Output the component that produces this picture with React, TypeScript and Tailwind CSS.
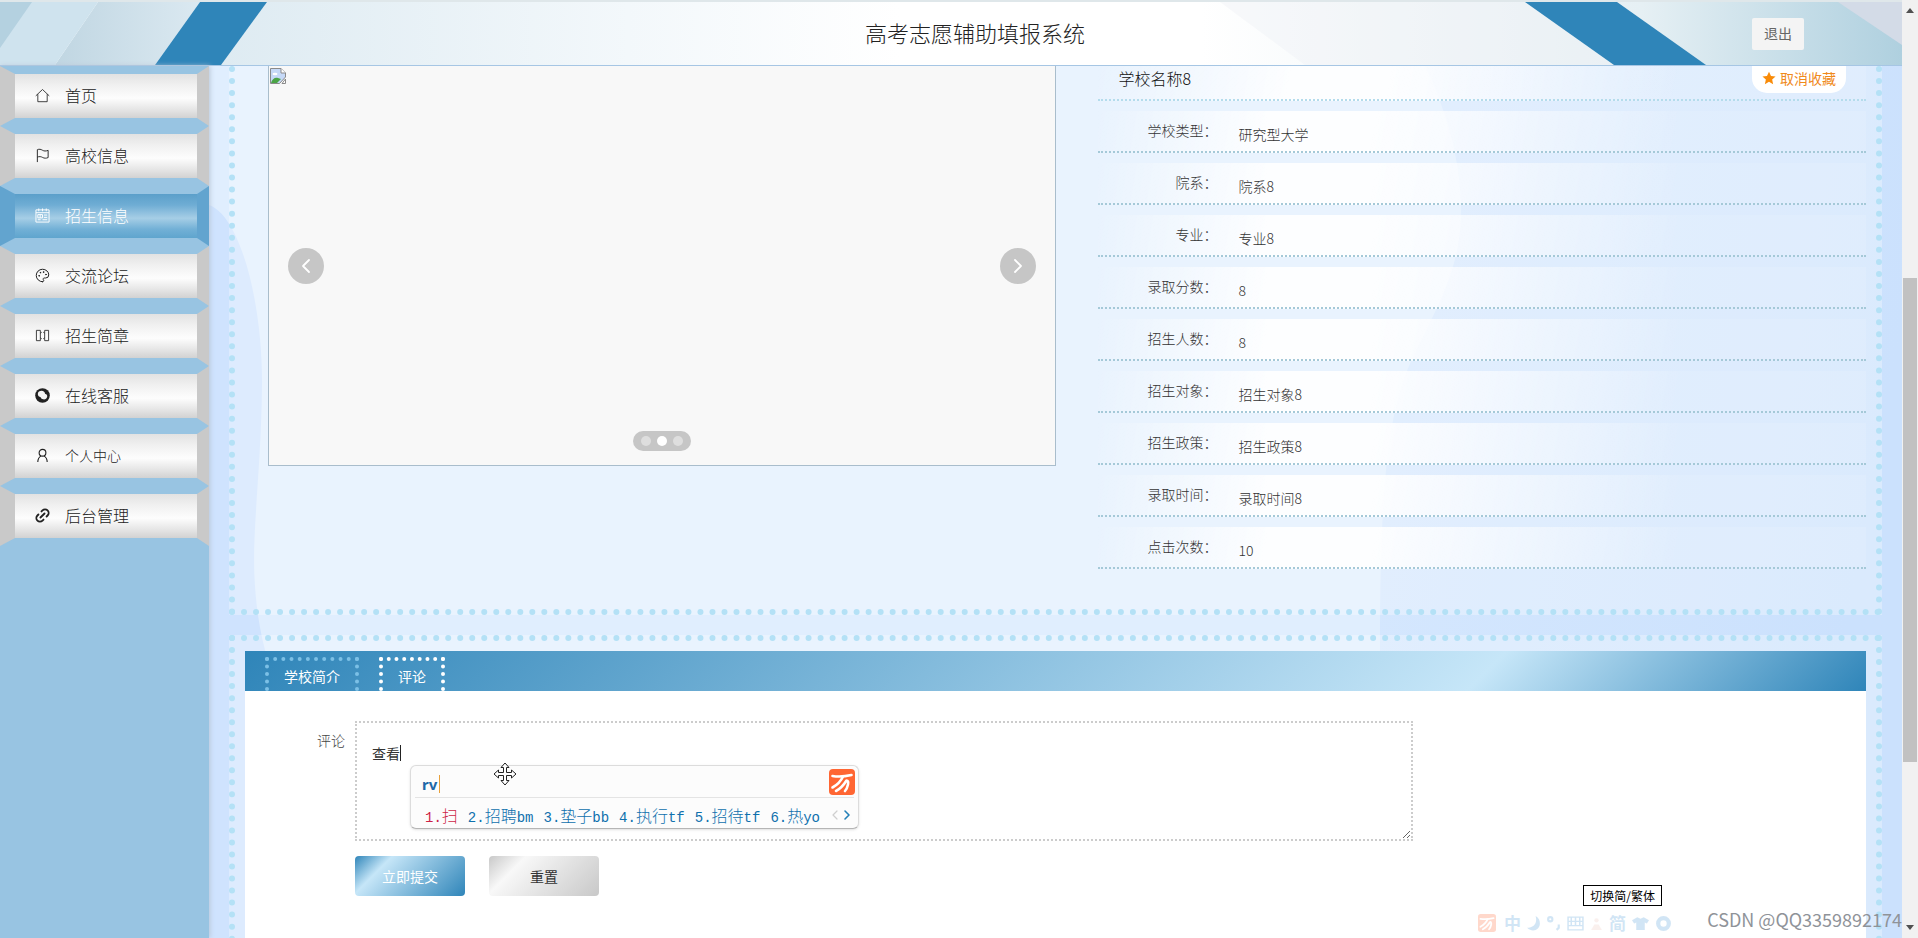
// src/pages/school/AdmissionDetail.tsx
import { useState } from "react";
import type { ReactNode } from "react";
import { ChevronLeft, ChevronRight, Link2, Palette } from "lucide-react";

type MenuItem = {
  label: string;
  icon: ReactNode;
  small?: boolean;
};

type DetailField = {
  label: string;
  value: string;
};

const MENU: MenuItem[] = [
  { label: "首页", icon: <HomeIcon /> },
  { label: "高校信息", icon: <FlagIcon /> },
  { label: "招生信息", icon: <TableIcon /> },
  { label: "交流论坛", icon: <Palette className="size-full" strokeWidth={1.6} /> },
  { label: "招生简章", icon: <BrochureIcon /> },
  { label: "在线客服", icon: <ServiceIcon /> },
  { label: "个人中心", icon: <UserIcon />, small: true },
  { label: "后台管理", icon: <ChainIcon /> },
];

const FIELDS: DetailField[] = [
  { label: "学校类型", value: "研究型大学" },
  { label: "院系", value: "院系8" },
  { label: "专业", value: "专业8" },
  { label: "录取分数", value: "8" },
  { label: "招生人数", value: "8" },
  { label: "招生对象", value: "招生对象8" },
  { label: "招生政策", value: "招生政策8" },
  { label: "录取时间", value: "录取时间8" },
  { label: "点击次数", value: "10" },
];

const CANDIDATES = [
  { word: "扫", code: "" },
  { word: "招聘", code: "bm" },
  { word: "垫子", code: "bb" },
  { word: "执行", code: "tf" },
  { word: "招待", code: "tf" },
  { word: "热", code: "yo" },
];

function HomeIcon() {
  return (
    <svg viewBox="0 0 16 16" className="size-full" fill="none" stroke="currentColor" strokeWidth="0.9">
      <path d="M.8 8.400 8 1.600l7.200 6.800M3 6.600v8h10v-8" />
    </svg>
  );
}

function FlagIcon() {
  return (
    <svg viewBox="0 0 16 16" className="size-full" fill="none" stroke="currentColor" strokeWidth="1">
      <path d="M2.500 15V1.800c2-.9 3.900-.4 5.500.6 1.700 1 3.500 1.100 6 .1v7.700c-2.200 1-4.200.8-5.800-.1-1.700-1-3.700-1.200-5.700-.4" />
    </svg>
  );
}

function TableIcon() {
  return (
    <svg viewBox="0 0 16 16" className="size-full" fill="none" stroke="currentColor" strokeWidth="1">
      <path d="M1 2h14v13H1zM1 5h14M4 .5v3M8 .5v3M12 .5v3" />
      <path d="M3 7h5v3.500H3zM9.500 7.500H13M9.500 10H13M3 12.500h3M8 12.500h5M5.500 7v3.500" />
    </svg>
  );
}

function BrochureIcon() {
  return (
    <svg viewBox="0 0 16 16" className="size-full" fill="none" stroke="currentColor" strokeWidth="0.9">
      <path d="M1.500 2.500h4.200v11H1.500zM10.300 2.500h4.200v11h-4.200zM5.700 5.500l1.500-1M5.700 10.500l1.500 1M10.300 5.500l-1.500-1M10.300 10.500l-1.500 1" />
    </svg>
  );
}

function ServiceIcon() {
  return (
    <svg viewBox="0 0 16 16" className="size-full">
      <circle cx="8" cy="8" r="7.800" fill="currentColor" />
      <path d="M3 6.500C3 4 5 3 7 3c2.200 0 3.600 1.500 3.700 3.200 1.700.3 2.600 1.700 2.300 3.200-.3 2-2.200 3-4.200 2.700-1.500-.2-2.300-1-2.800-2.200C4.500 9.600 3 8.500 3 6.500z" fill="#f5f5f5" />
    </svg>
  );
}

function UserIcon() {
  return (
    <svg viewBox="0 0 16 16" className="size-full" fill="none" stroke="currentColor" strokeWidth="1.200">
      <circle cx="8" cy="5" r="3.600" />
      <path d="M3 15c0-3 1.300-5.300 3.500-6.600M13 15c0-3-1.300-5.300-3.500-6.600" />
    </svg>
  );
}

function ChainIcon() {
  return <Link2 className="size-full scale-115 -rotate-45" strokeWidth={2.600} />;
}

function BrokenImageIcon() {
  return (
    <svg viewBox="0 0 16 16" className="size-4" role="img" aria-label="图片">
      <path d="M.5.500h10.500l4.500 4.500v4l-6 6.500h-9z" fill="#c6d9f7" stroke="#8a8a8a" />
      <path d="M11 .500v4.500h4.500" fill="#fff" stroke="#8a8a8a" />
      <ellipse cx="5" cy="6" rx="2.500" ry="1.300" fill="#fff" />
      <path d="M1 15c1-4 4-6 7-5l3 1-4 4z" fill="#4ba446" />
      <path d="M15.500 11v4.500H12z" fill="#fff" stroke="#8a8a8a" />
    </svg>
  );
}

function WubiLogo({ className }: { className: string }) {
  return (
    <svg viewBox="0 0 26 26" className={className} aria-hidden="true">
      <rect width="26" height="26" rx="4" fill="#ff6633" />
      <g fill="none" stroke="#fff" strokeWidth="2.600" strokeLinecap="round" strokeLinejoin="round">
        <path d="M3.500 7c6 1 12 .6 19-1" />
        <path d="M14 7.500C12 12 8 16 3.500 18.500" />
        <path d="M7 22c5-2.500 8-6.500 10.500-10.500 1.500 0 2 1.500 1.500 4-.4 2-1.300 4.500-3 6.500" />
      </g>
    </svg>
  );
}

function Header() {
  return (
    <header className="relative h-[66px] shrink-0 overflow-hidden border-t-2 border-b border-t-[#dfe7ea] border-b-[#a6c6e4] bg-white">
      {/* decorative stripes, pinned to each end */}
      <svg className="absolute top-0 left-0 h-full" width="900" height="63" viewBox="0 0 900 63" preserveAspectRatio="none">
        <defs>
          <linearGradient id="fadeLeft">
            <stop offset="0" stopColor="#deebf2" />
            <stop offset="0.600" stopColor="#f3f8fb" />
            <stop offset="1" stopColor="#ffffff" />
          </linearGradient>
          <linearGradient id="shadeLeft">
            <stop offset="0" stopColor="#c0d6e2" />
            <stop offset="1" stopColor="#dbe9f1" />
          </linearGradient>
        </defs>
        <path d="M221 0H900V63H221z" fill="url(#fadeLeft)" />
        <path d="M98 0H200L155 63H55z" fill="url(#shadeLeft)" />
        <path d="M0 0H98L55 63H0z" fill="#cfe3ee" />
        <path d="M0 0H32L0 46z" fill="#b4d1e0" />
        <path d="M200 0H267L221 63H155z" fill="#2f85b9" />
      </svg>
      <svg className="absolute top-0 right-0 h-full" width="1002" height="63" viewBox="900 0 1002 63" preserveAspectRatio="none">
        <defs>
          <linearGradient id="fadeRight">
            <stop offset="0" stopColor="#ffffff" />
            <stop offset="0.300" stopColor="#ffffff" />
            <stop offset="0.740" stopColor="#e6f0f4" />
            <stop offset="1" stopColor="#afd0df" />
          </linearGradient>
        </defs>
        <path d="M900 0H1902V63H900z" fill="url(#fadeRight)" />
        <path d="M1220 0H1525L1614 63H1305z" fill="#eef0f4" opacity="0.400" />
        <path d="M1525 0H1617L1706 63H1614z" fill="#2f85b9" />
        <path d="M1838 0H1902V43z" fill="#d3dbe7" />
      </svg>
      <div className="relative grid h-full grid-cols-[1fr_auto_1fr] items-center pr-[98px] pl-[146px]">
        <span />
        <h1 className="pb-1 text-[22px] leading-8 font-light text-[#222]">高考志愿辅助填报系统</h1>
        <button type="button" className="h-8 w-[52px] justify-self-end rounded-xs bg-[#f4f4f4] pb-px text-sm text-[#666]">
          退出
        </button>
      </div>
    </header>
  );
}

function Sidebar({ active }: { active: string }) {
  return (
    <nav className="z-10 w-[209px] shrink-0 bg-[#98c4e2] shadow-[1px_0_5px_#b9c6d8]">
      <ul>
        {MENU.map((item) => {
          const isActive = item.label === active;
          return (
            <li key={item.label}>
              <a
                href="#"
                className={
                  "flex h-[60px] items-center gap-[15px] border-y-8 border-r-[12px] border-l-[15px] border-y-[#98c4e2] pb-[2px] pl-5 " +
                  (isActive
                    ? "border-x-[#62a4cf] bg-[linear-gradient(180deg,#5b9fca_0%,#6fadd4_25%,#a6cee6_55%,#72b0d6_80%,#5fa5ce_100%)] text-white"
                    : "border-x-[#c9c9c9] bg-[linear-gradient(180deg,#e2e2e2_0%,#f0f0f0_25%,#fdfdfd_55%,#e6e6e6_80%,#d2d2d2_100%)] text-[#222]")
                }
              >
                <span className="size-[15px]">{item.icon}</span>
                <span className={item.small ? "text-sm font-light" : "text-base font-light"}>{item.label}</span>
              </a>
            </li>
          );
        })}
      </ul>
    </nav>
  );
}

function Backdrop() {
  return (
    <svg className="absolute inset-0 size-full" viewBox="0 0 1693 872" preserveAspectRatio="none" aria-hidden="true">
      <defs>
        <linearGradient id="waveRight" x1="0" y1="0" x2="1" y2="0.300">
          <stop offset="0" stopColor="#d6e8fe" />
          <stop offset="1" stopColor="#cbe1fd" />
        </linearGradient>
      </defs>
      <path d="M0 139C32 150 54 240 53 320C52 410 42 470 46 520C49 565 58 600 80 650V872H0z" fill="#cfe3fe" />
      <path d="M1216 0C1235 40 1252 90 1252 145C1252 215 1215 260 1196 310C1178 360 1171 430 1171 580V872H1693V0z" fill="url(#waveRight)" />
    </svg>
  );
}

function Carousel() {
  const [slide, setSlide] = useState(1);

  return (
    <div className="relative h-[400px] min-w-0 flex-[788] border border-t-0 border-[#a9bdcc] bg-[#f8f8f8] pt-[2px] pl-px">
      <BrokenImageIcon />
      <button
        type="button"
        aria-label="上一张"
        onClick={() => setSlide((slide + 2) % 3)}
        className="absolute top-[182px] left-[19px] grid size-9 place-items-center rounded-full bg-[#c6c6c6] text-white"
      >
        <ChevronLeft className="size-6" strokeWidth={1.800} />
      </button>
      <button
        type="button"
        aria-label="下一张"
        onClick={() => setSlide((slide + 1) % 3)}
        className="absolute top-[182px] right-[19px] grid size-9 place-items-center rounded-full bg-[#c6c6c6] text-white"
      >
        <ChevronRight className="size-6" strokeWidth={1.800} />
      </button>
      <div className="absolute bottom-[14px] left-1/2 flex h-5 w-[58px] -translate-x-1/2 items-center justify-center gap-[6px] rounded-full bg-[#c6c6c6]">
        {[0, 1, 2].map((i) => (
          <button
            key={i}
            type="button"
            aria-label={`第${i + 1}张`}
            onClick={() => setSlide(i)}
            className={i === slide ? "size-[10px] rounded-full bg-white" : "size-[10px] rounded-full bg-[#dedede]"}
          />
        ))}
      </div>
    </div>
  );
}

function SchoolDetail() {
  return (
    <div className="min-w-0 flex-[770] text-sm font-light text-[#333]">
      <div className="flex h-[35px] items-start justify-between border-b-2 border-dotted border-[#b4dcec] bg-[linear-gradient(100deg,rgba(255,255,255,0)_0%,rgba(255,255,255,0.9)_25%,rgba(255,255,255,0.9)_38%,rgba(255,255,255,0.1)_75%)] pr-5 pl-5">
        <h2 className="text-base leading-6 text-[#111]">学校名称8</h2>
        <button type="button" className="flex h-[27px] items-center gap-1 rounded-b-[15px] bg-white px-[10px] pb-[4px] font-normal text-[#f08a1c]">
          <svg viewBox="0 0 16 16" className="size-[14px]" fill="#f98b08">
            <path d="M8 .8l2.300 4.800 5.200.6-3.900 3.600 1.100 5.200L8 12.400 3.300 15l1.100-5.200L.5 6.200l5.200-.6z" />
          </svg>
          取消收藏
        </button>
      </div>
      <dl>
        {FIELDS.map((f) => (
          <div
            key={f.label}
            className="mt-[10px] flex h-[42px] gap-5 border-b-2 border-dotted border-[#a5c9d8] bg-[linear-gradient(100deg,rgba(255,255,255,0)_0%,rgba(255,255,255,0.9)_22%,rgba(255,255,255,0.9)_36%,rgba(255,255,255,0.1)_75%)]"
          >
            <dt className="w-[120px] pr-px text-right leading-[38px]">{f.label}：</dt>
            <dd className="pt-1 leading-[38px]">{f.value}</dd>
          </div>
        ))}
      </dl>
    </div>
  );
}

// candidate window of the input method, floats over the textarea
function CandidateWindow() {
  return (
    <div className="absolute top-[44px] left-[55px] h-16 w-[449px] rounded-md border border-[#dcdcdc] border-b-[#b5b5b5] bg-[#fcfcfc] shadow-sm">
      <div className="mx-1 flex h-8 items-center border-b border-[#e4e4e4] pt-1 pl-[7px]">
        <span className="font-[Noto_Sans,sans-serif] text-[15px] leading-5 font-bold text-[#2068a8]">rv</span>
        <span className="ml-[2px] h-[18px] w-px bg-[#e8a13c]" />
      </div>
      <WubiLogo className="absolute top-[3px] right-[3px] size-[26px]" />
      <ol className="flex h-[30px] items-center gap-[10px] pt-1 pl-[14px]">
        {CANDIDATES.map((c, i) => (
          <li
            key={c.word}
            className={"flex items-baseline text-base leading-6 font-light " + (i === 0 ? "text-[#cc1f45]" : "text-[#0f70ad]")}
          >
            <span className="font-[Liberation_Mono,monospace] text-sm">{i + 1}.</span>
            {c.word}
            <span className="font-[Liberation_Mono,monospace] text-sm">{c.code}</span>
          </li>
        ))}
      </ol>
      <div className="absolute right-[3px] bottom-[5px] flex">
        <ChevronLeft className="size-4 -mr-1 text-[#cfcfcf]" strokeWidth={1.800} />
        <ChevronRight className="size-4 text-[#2380b8]" strokeWidth={2.400} />
      </div>
    </div>
  );
}

function MoveCursor() {
  return (
    <svg viewBox="0 0 24 24" className="absolute top-[41px] left-[138px] size-6" fill="#fff" stroke="#222" strokeWidth="1">
      <path d="M12 1l4 4.500h-2.500v5h5V8l4.500 4-4.500 4v-2.500h-5v5H16L12 23l-4-4.500h2.500v-5h-5V16L1 12l4.500-4v2.500h5v-5H8z" />
    </svg>
  );
}

function CommentPanel() {
  const [comment, setComment] = useState("查看");

  return (
    <section className="mt-5 flex-1 border-6 border-b-0 border-dotted border-[#b4e1f6] bg-white/30 px-[10px] pt-[10px] text-sm">
      <div role="tablist" className="flex h-10 items-end gap-5 bg-[linear-gradient(135deg,#2f85b9_0%,#c6e6f8_76%,#2f85b9_100%)] pl-5 text-white">
        <button type="button" role="tab" aria-selected="false" className="h-[34px] border-4 border-b-0 border-dotted border-[#7cc0e6] px-[15px]">
          学校简介
        </button>
        <button type="button" role="tab" aria-selected="true" className="h-[34px] border-4 border-b-0 border-dotted border-white px-[15px]">
          评论
        </button>
      </div>
      <form className="h-[600px] bg-white pt-[30px] pl-[110px]" onSubmit={(e) => e.preventDefault()}>
        <div className="relative w-[70%]">
          <label htmlFor="comment" className="absolute top-[9px] right-full mr-[10px] font-light whitespace-nowrap text-[#444]">
            评论
          </label>
          <textarea
            id="comment"
            value={comment}
            onChange={(e) => setComment(e.target.value)}
            className="block h-[120px] w-full resize border-2 border-dotted border-[#ccc] bg-white px-[15px] py-5 leading-5 text-[#333] outline-none"
          />
          <span className="absolute top-[24px] left-[45px] h-4 w-px bg-[#222]" />
          <CandidateWindow />
          <MoveCursor />
        </div>
        <div className="mt-[15px] flex gap-6">
          <button type="submit" className="h-10 w-[110px] rounded bg-[linear-gradient(135deg,#2f85b9_0%,#c6e6f8_25%,#2f85b9_100%)] text-white">
            立即提交
          </button>
          <button
            type="reset"
            onClick={() => setComment("")}
            className="h-10 w-[110px] rounded bg-[linear-gradient(135deg,#c8c8c8_0%,#f8f8f8_25%,#c8c8c8_100%)] text-[#333]"
          >
            重置
          </button>
        </div>
      </form>
    </section>
  );
}

// floating status bar of the input method, faded out
function ImeToolbar() {
  return (
    <div className="absolute right-[230px] bottom-[3px] flex h-6 items-center gap-1 text-[17px] leading-5 font-bold text-[#4d9bd8] opacity-25">
      <WubiLogo className="mr-1 size-[18px]" />
      <span>中</span>
      <svg viewBox="0 0 16 16" className="size-[17px]" fill="currentColor">
        <path d="M10 1c2 7-2 11-8 11 5 5 12 2 12-4 0-3-1-5-4-7z" />
      </svg>
      <svg viewBox="0 0 16 16" className="size-[17px]" fill="none" stroke="currentColor" strokeWidth="2">
        <circle cx="4" cy="4" r="2" />
        <path d="M12 9v3l-2 2" />
      </svg>
      <svg viewBox="0 0 16 16" className="size-[17px]" fill="none" stroke="currentColor" strokeWidth="1.400">
        <path d="M1 2h14v12H1zM1 6h14M1 10h14M4 2v8M8 2v8M12 2v8" />
      </svg>
      <svg viewBox="0 0 16 16" className="size-[17px] opacity-50" fill="#e08a7a">
        <circle cx="8" cy="5" r="2" />
        <path d="M3 14l3-5h4l3 5z" />
      </svg>
      <span>简</span>
      <svg viewBox="0 0 16 16" className="mx-[2px] size-[17px]" fill="currentColor">
        <path d="M5 2l3 1.500L11 2l5 3-2 3-2-1v7H4V7L2 8 0 5z" />
      </svg>
      <svg viewBox="0 0 16 16" className="size-[17px]" fill="none" stroke="currentColor" strokeWidth="4">
        <circle cx="8" cy="8" r="5" />
      </svg>
    </div>
  );
}

function ScrollTrack() {
  return (
    <div className="flex w-4 shrink-0 flex-col items-center bg-[#f1f1f1] py-[8px]" aria-hidden="true">
      <svg viewBox="0 0 8 5" className="h-[5px] w-2" fill="#505050">
        <path d="M4 0l4 5H0z" />
      </svg>
      <div className="flex-[265]" />
      <div className="w-[14px] flex-[484] bg-[#c1c1c1]" />
      <div className="flex-[163]" />
      <svg viewBox="0 0 8 5" className="h-[5px] w-2" fill="#505050">
        <path d="M4 5l4-5H0z" />
      </svg>
    </div>
  );
}

export default function App() {
  return (
    <div className="flex h-screen overflow-hidden bg-white font-['Noto_Sans_CJK_SC',sans-serif]">
      <div className="relative flex min-w-0 flex-1 flex-col overflow-hidden">
        <Header />
        <div className="flex min-h-0 flex-1">
          <Sidebar active="招生信息" />
          <main className="relative min-w-0 flex-1 overflow-hidden bg-[#e0eefe]">
            <Backdrop />
            <div className="relative flex flex-col px-5">
              <section className="flex gap-[42px] border-6 border-t-0 border-dotted border-[#b4e1f6] bg-white/30 pr-[10px] pb-10 pl-[33px]">
                <Carousel />
                <SchoolDetail />
              </section>
              <CommentPanel />
            </div>
          </main>
        </div>
        <span className="absolute right-[240px] bottom-8 border border-black bg-white px-[6px] text-xs leading-[19px] text-black">
          切换简/繁体
        </span>
        <ImeToolbar />
        <span className="absolute right-0 bottom-[7px] text-lg leading-6 text-[#8f9399]">CSDN @QQ3359892174</span>
      </div>
      <ScrollTrack />
    </div>
  );
}
